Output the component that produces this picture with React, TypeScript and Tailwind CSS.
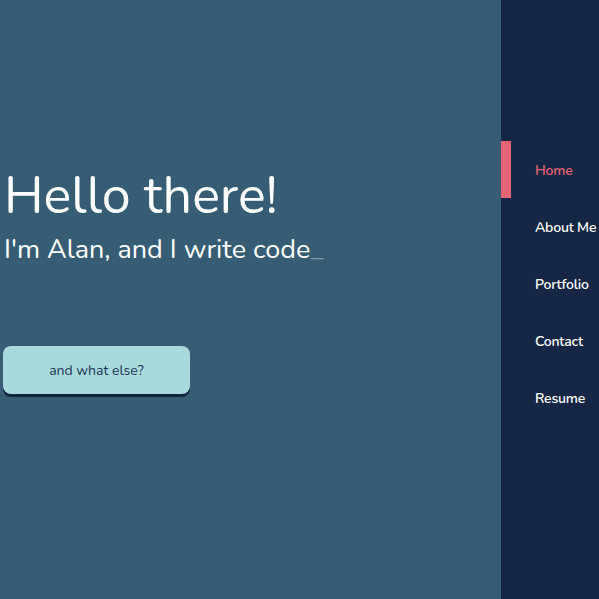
import { useState } from 'react'

const links = ['Home', 'About Me', 'Portfolio', 'Contact', 'Resume']

export default function App() {
  const [active, setActive] = useState('Home')

  return (
    <div className="flex h-[599px] w-[599px] overflow-hidden bg-[#365d74] font-['Nunito','Lato',sans-serif]">
      <main className="flex-1 pl-[4px] pt-[166px]">
        <h1 className="text-[52px] leading-[60px] text-white">Hello there!</h1>
        <p className="mt-[7px] text-[27px] leading-[34px] text-white">
          I'm Alan, and I write code<span className="text-white/40">_</span>
        </p>
        <button
          type="button"
          className="ml-[-1px] mt-[79px] h-[48px] w-[187px] rounded-[8px] bg-[#a8dadc] text-[14px] text-[#1d3557] shadow-[0_3px_0_#13253d]"
        >
          and what else?
        </button>
      </main>

      <nav className="flex w-[98px] flex-col bg-[#152744] pt-[141px]">
        {links.map((l) => (
          <button
            key={l}
            type="button"
            onClick={() => setActive(l)}
            className={`flex h-[57px] items-center border-l-[10px] pl-[24px] pt-[2px] text-left text-[14px] font-semibold tracking-[-0.2px] whitespace-nowrap ${
              active === l ? 'border-[#e76373] text-[#e76373]' : 'border-transparent text-white'
            }`}
          >
            {l}
          </button>
        ))}
      </nav>
    </div>
  )
}
